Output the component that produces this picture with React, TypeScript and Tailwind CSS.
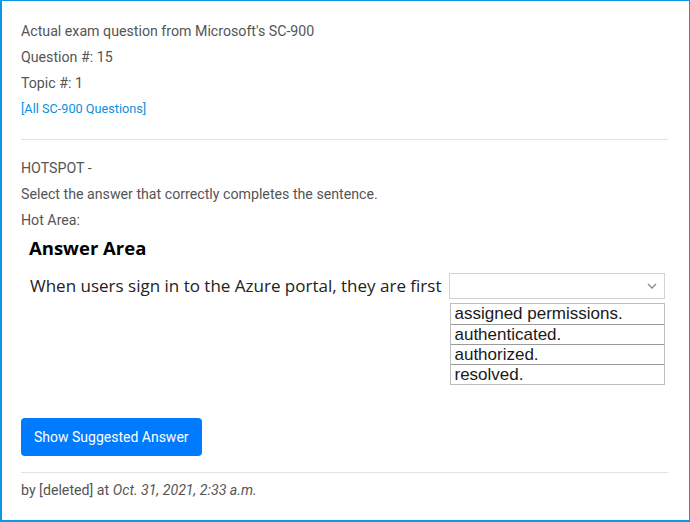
const options = ["assigned permissions.", "authenticated.", "authorized.", "resolved."];

function AnswerArea() {
  return (
    <div className="h-[159px] w-[647px] bg-white font-['Open_Sans',sans-serif] text-[#111]">
      <div className="pl-2 pt-[2px] text-[18.5px] font-bold leading-[26px] text-black">Answer Area</div>
      <div className="mt-[12px] flex items-start">
        <div className="ml-[9px] mt-[1px] text-[17px] leading-[24px] text-[#222]">
          When users sign in to the Azure portal, they are first
        </div>
        <div className="ml-[8px] flex flex-col">
          <div className="flex h-[26px] w-[216px] items-center justify-end border border-[#d4d4d4] pr-[7px]">
            <svg width="10" height="6" viewBox="0 0 10 6" fill="none" stroke="#888" strokeWidth="1.3">
              <path d="M1 1l4 4 4-4" />
            </svg>
          </div>
          <div className="ml-[1px] mt-[4px] w-[215px] border border-[#bdbdbd] font-['Liberation_Sans',Arial,sans-serif]">
            {options.map((o, i) => (
              <div
                key={o}
                className={
                  "h-[20px] pl-[3px] text-[17px] leading-[20px] text-[#1a1a1a] " +
                  (i > 0 ? "border-t border-[#9a9a9a]" : "")
                }
              >
                {o}
              </div>
            ))}
          </div>
        </div>
      </div>
    </div>
  );
}

export default function App() {
  return (
    <div className="h-[522px] w-[690px] border-t border-r border-l-2 border-b-2 border-[#0a97e3] bg-white font-['Roboto',sans-serif] text-[14.2px] text-[#555]">
      <div className="px-[19px] pt-[17px]">
        <div className="leading-[26px]">
          <p>Actual exam question from Microsoft's SC-900</p>
          <p>Question #: 15</p>
          <p>Topic #: 1</p>
          <p className="text-[12.7px] text-[#0a8fe0]">[All SC-900 Questions]</p>
        </div>
        <hr className="mt-[17px] w-[647px] border-t border-[#e2e2e2]" />
        <div className="mt-[15px] leading-[26px]">
          <p>HOTSPOT -</p>
          <p>Select the answer that correctly completes the sentence.</p>
          <p>Hot Area:</p>
        </div>
        <AnswerArea />
        <button className="mt-[26px] h-[38px] rounded-[4px] bg-[#007bff] px-[13px] text-[14px] text-white">
          Show Suggested Answer
        </button>
        <hr className="mt-[16px] w-[647px] border-t border-[#e2e2e2]" />
        <p className="mt-[4px] leading-[26px]">
          by [deleted] at <em>Oct. 31, 2021, 2:33 a.m.</em>
        </p>
      </div>
    </div>
  );
}
